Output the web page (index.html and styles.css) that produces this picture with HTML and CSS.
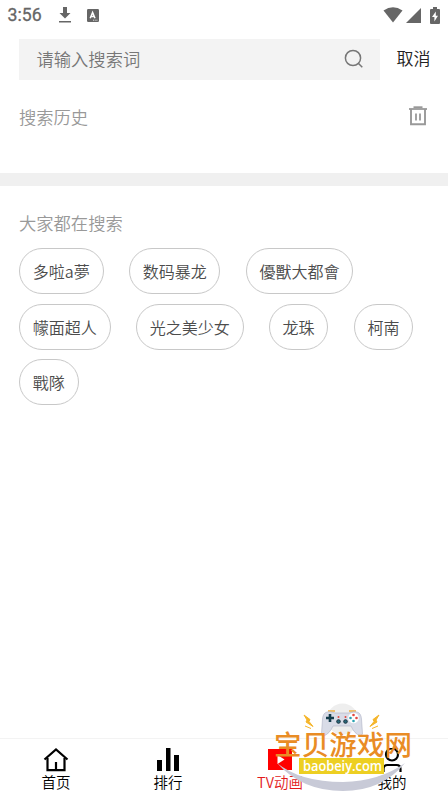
FILE: index.html
```html
<!DOCTYPE html>
<html lang="zh-CN">
<head>
  <meta charset="UTF-8">
  <meta name="viewport" content="width=device-width, initial-scale=1.0">
  <title>搜索</title>
  <link rel="stylesheet" href="styles.css">
</head>
<body>
  <div class="app">
    <header class="status">
      <span class="time">3:56</span>
      <svg class="download" width="14" height="18" viewBox="0 0 14 18">
        <path d="M5 1h4v6h3.500L7 12.500 1.500 7H5zM1 15h12v1.400H1z" fill="#666"/>
      </svg>
      <svg class="badge" width="12" height="13" viewBox="0 0 12 13">
        <rect width="12" height="13" rx="1.200" fill="#666"/>
        <path d="M3.200 9.300L5.600 3.500 8 9.300M4 7.500h3.200" fill="none" stroke="#fff" stroke-width="1.500"/>
        <path d="M6 11.200h5" stroke="#fff" stroke-width=".8" stroke-dasharray="1 .7"/>
      </svg>
      <div class="signals">
        <svg width="20" height="16" viewBox="0 0 20 16"><path d="M.5 3.600Q10-3 19.500 3.600L10 15.500z" fill="#666"/></svg>
        <svg width="15" height="15" viewBox="0 0 15 15"><path d="M15 0v15H0z" fill="#666"/></svg>
        <svg class="battery" width="10" height="17" viewBox="0 0 10 17">
          <path d="M3 0h4v2h2q1 0 1 1v13q0 1-1 1H1q-1 0-1-1V3q0-1 1-1h2z" fill="#666"/>
          <path d="M5.800 4.500L2 10h2.400v4.500L8 8.800H5.800z" fill="#fff"/>
        </svg>
      </div>
    </header>

    <div class="search">
      <div class="search-box">
        <span>请输入搜索词</span>
        <svg width="20" height="20" viewBox="0 0 20 20" fill="none" stroke="#777" stroke-width="1.500">
          <circle cx="9" cy="9" r="7.600"/>
          <path d="M14.300 14.300l4 4"/>
        </svg>
      </div>
      <span class="cancel">取消</span>
    </div>

    <section class="history">
      <h2>搜索历史</h2>
      <svg width="20" height="20" viewBox="0 0 20 20" fill="none" stroke="#999">
        <path d="M1 3h18" stroke-width="1.800"/>
        <path d="M5.500 1.200h9" stroke-width="1.800"/>
        <path d="M3 3v15.200h14V3" stroke-width="1.900"/>
        <path d="M8 7.500v7M12 7.500v7" stroke-width="1.800"/>
      </svg>
    </section>

    <section class="popular">
      <h2>大家都在搜索</h2>
      <div class="tags">
        <span class="tag">多啦a夢</span>
        <span class="tag">数码暴龙</span>
        <span class="tag">優獸大都會</span>
        <span class="tag">幪面超人</span>
        <span class="tag">光之美少女</span>
        <span class="tag">龙珠</span>
        <span class="tag">柯南</span>
        <span class="tag">戰隊</span>
      </div>
    </section>

    <nav class="tabs">
      <div class="tab">
        <svg width="26" height="24" viewBox="0 0 26 24" fill="none" stroke="#000" stroke-width="2.200">
          <path d="M1.500 11.500L13 1.500l11.500 10"/>
          <path d="M4.500 10v12.200h17V10M13 14v8"/>
        </svg>
        <span>首页</span>
      </div>
      <div class="tab">
        <svg width="26" height="24" viewBox="0 0 26 24"><path d="M2 12h5v11H2zM11 0h4.500v23H11zM19 7h5v16h-5z"/></svg>
        <span>排行</span>
      </div>
      <div class="tab active">
        <svg width="26" height="24" viewBox="0 0 26 24">
          <path d="M1 1h24v21H1z" fill="#f00"/>
          <path d="M10.500 7l7 4.500-7 4.500z" fill="#fff"/>
        </svg>
        <span>TV动画</span>
      </div>
      <div class="tab">
        <svg width="26" height="24" viewBox="0 0 26 24" fill="none" stroke="#000" stroke-width="2.200">
          <circle cx="13" cy="6.500" r="6"/>
          <path d="M4.500 24v-3q0-4 4-4h9q4 0 4 4v3"/>
        </svg>
        <span>我的</span>
      </div>
    </nav>

    <svg class="logo" width="148" height="96" viewBox="270 700 148 96">
      <circle cx="342.500" cy="719" r="15.500" fill="#eee"/>
      <path d="M304 715l6 4.500-1 2 4 5-7-4.500 1-2zM379 715l-6 4.500 1 2-4 5 7-4.500-1-2zM305 726l6 2.500M378 726l-6 2.500" fill="#f5b52a" stroke="#f5b52a"/>
      <path d="M328 711h7M349 711h7" stroke="#f0b040" stroke-width="1.500"/>
      <path d="M327 712q3-1 8 1h14q5-2 8-1 4 1 4.500 7l1 15-2 2q-6-2-9.500-10h-18q-3.500 8-9.500 10l-2-2 1-15q.500-6 4.500-7z" fill="#d9dce7" stroke="#aeb2c5" stroke-width=".6"/>
      <path d="M330 714v8M326 718h8" stroke="#153d4c" stroke-width="2.600"/>
      <circle cx="353.500" cy="718" r="5.300" fill="#fff"/>
      <g fill="#e2473f"><circle cx="353.500" cy="715" r="1.300"/><circle cx="356.500" cy="718" r="1.300"/><circle cx="338.500" cy="717" r="1"/><circle cx="345.500" cy="717" r="1"/></g>
      <g fill="#29a2b2"><circle cx="350.500" cy="718" r="1.300"/><circle cx="353.500" cy="721" r="1.300"/></g>
      <g fill="#29677a" stroke="#183440"><circle cx="338.500" cy="721.500" r="1.800"/><circle cx="345.500" cy="721.500" r="1.800"/></g>
      <path d="M277 763Q300 782 343 782Q380 781 405 763Q382 791 343 791Q302 791 277 763z" fill="#c8cad7"/>
      <path d="M299 758h85v16h-85z" fill="#edcf22"/>
      <text class="logo-name" x="274" y="755" textLength="138">宝贝游戏网</text>
      <text class="logo-site" x="303" y="771" textLength="79" lengthAdjust="spacingAndGlyphs">baobeiy.com</text>
    </svg>
  </div>
</body>
</html>
```

FILE: styles.css
```css
* {
  box-sizing: border-box;
}

body {
  margin: 0;
  background: #fff;
  font-family: "Noto Sans CJK SC", sans-serif;
  font-weight: 350;
}

.app {
  position: relative;
  display: flex;
  flex-direction: column;
  height: 796px;
  overflow: hidden;
}

svg {
  display: block;
  flex: none;
}

.status {
  display: flex;
  align-items: center;
  height: 39px;
  padding: 0 8px 9px 7.5px;
  color: #666;
}

.time {
  width: 50px;
  font: 400 17.7px Roboto, sans-serif;
  -webkit-text-stroke: 0.3px #666;
}

.badge {
  margin-left: 15px;
}

.signals {
  display: flex;
  align-items: center;
  gap: 3px;
  margin-left: auto;
}

.battery {
  margin-left: 6px;
}

.search {
  display: flex;
  align-items: center;
  height: 41px;
  padding-left: 19px;
}

.search-box {
  display: flex;
  align-items: center;
  justify-content: space-between;
  width: 361px;
  height: 41px;
  padding: 0 16px 2px 17.5px;
  background: #f3f3f3;
  color: #777;
  font-size: 17.3px;
}

.cancel {
  margin-left: 16.5px;
  padding-bottom: 4px;
  color: #222;
  font-size: 17px;
}

.history {
  display: flex;
  justify-content: space-between;
  height: 106px;
  padding: 24px 20px 0 19px;
  border-bottom: 13px solid #f0f0f0;
}

.history svg {
  margin-top: 2px;
}

h2 {
  margin: 0;
  color: #999;
  font-size: 17.3px;
  font-weight: 350;
  line-height: 25px;
}

.popular {
  flex: 1;
  padding: 24px 19px 0;
}

.tags {
  display: flex;
  flex-wrap: wrap;
  gap: 9.6px 25.3px;
  margin-top: 13px;
}

.tag {
  height: 46px;
  padding: 0 12.8px;
  border: 1px solid #c8c8c8;
  border-radius: 23px;
  color: #4c4c4c;
  font-size: 16px;
  line-height: 44px;
}

.tabs {
  display: flex;
  height: 58px;
  border-top: 1px solid #f3f3f3;
}

.tab {
  display: flex;
  flex: 1;
  flex-direction: column;
  align-items: center;
  padding-top: 9px;
  font-size: 14.5px;
  line-height: 20px;
}

.active {
  color: #e31b1b;
}

.logo {
  position: absolute;
  right: 30px;
  bottom: 0;
}

.logo-name {
  fill: #e98c25;
  font-size: 27.5px;
  font-weight: 500;
}

.logo-site {
  fill: #fff;
  font-family: "Open Sans", sans-serif;
  font-size: 14.5px;
  font-weight: 600;
}
```
